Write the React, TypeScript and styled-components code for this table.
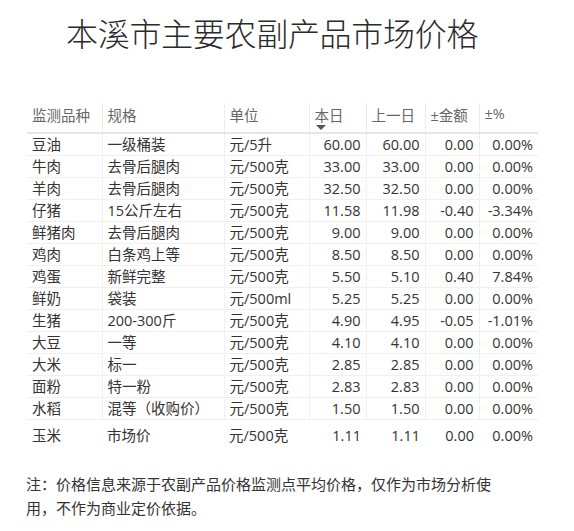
import styled, { createGlobalStyle } from 'styled-components'

const GlobalStyle = createGlobalStyle`
  body {
    margin: 0;
    background: #ffffff;
    font-family: "Open Sans", "Noto Sans CJK SC", sans-serif;
    color: #333333;
    text-spacing-trim: space-all;
  }
`

const Page = styled.main`
  width: 574px;
  height: 531px;
  display: flex;
  flex-direction: column;
  overflow: hidden;
`

const Title = styled.h1`
  margin: 0;
  padding: 11px 0 0 66px;
  font-family: "Noto Sans CJK SC", sans-serif;
  font-weight: 300;
  font-size: 32px;
  line-height: 42px;
  color: #2a2a2a;
  letter-spacing: -0.3px;
`

const TableWrap = styled.section`
  margin: 50px 0 0 27px;
  width: 511px;
`

const Table = styled.table`
  border-collapse: collapse;
  table-layout: fixed;
  width: 511px;
  font-size: 14.5px;
  font-family: "Open Sans", "Noto Sans CJK SC", sans-serif;
`

const Col = styled.col<{ $w: number }>`
  width: ${(p) => p.$w}px;
`

const HeadCell = styled.th`
  box-sizing: border-box;
  height: 30px;
  padding: 1px 0 0 5px;
  vertical-align: top;
  text-align: left;
  font-weight: 400;
  color: #666666;
  border-left: 1px solid #ececec;
  border-bottom: 2px solid #e6e6e6;
  position: relative;
  white-space: nowrap;
  overflow: hidden;

  &:first-child {
    border-left: none;
  }
`

const SortArrow = styled.span`
  position: absolute;
  left: 6px;
  top: 22px;
  width: 0;
  height: 0;
  border-left: 5px solid transparent;
  border-right: 5px solid transparent;
  border-top: 5px solid #555555;
`

const Row = styled.tr<{ $last?: boolean }>`
  height: ${(p) => (p.$last ? 27 : 22)}px;
`

const Cell = styled.td<{ $num?: boolean; $last?: boolean }>`
  box-sizing: border-box;
  padding: ${(p) => (p.$last ? '5px' : '0')} ${(p) => (p.$num ? '5px' : '0')} 0
    ${(p) => (p.$num ? '0' : '5px')};
  text-align: ${(p) => (p.$num ? 'right' : 'left')};
  color: #333333;
  white-space: nowrap;
  overflow: hidden;
  line-height: 21px;
  border-left: ${(p) => (p.$last ? 'none' : '1px solid #f0f0f0')};
  border-bottom: ${(p) => (p.$last ? 'none' : '1px solid #f0f0f0')};

  &:first-child {
    border-left: none;
  }
`

const Note = styled.p`
  margin: 25px 0 0 26px;
  width: 470px;
  font-size: 15px;
  line-height: 24px;
  color: #333333;
`

const columns = [
  { label: '监测品种', w: 75 },
  { label: '规格', w: 122 },
  { label: '单位', w: 85 },
  { label: '本日', w: 57, sorted: true },
  { label: '上一日', w: 59 },
  { label: '±金额', w: 54 },
  { label: '±%', w: 59 },
]

const rows: [string, string, string, string, string, string, string][] = [
  ['豆油', '一级桶装', '元/5升', '60.00', '60.00', '0.00', '0.00%'],
  ['牛肉', '去骨后腿肉', '元/500克', '33.00', '33.00', '0.00', '0.00%'],
  ['羊肉', '去骨后腿肉', '元/500克', '32.50', '32.50', '0.00', '0.00%'],
  ['仔猪', '15公斤左右', '元/500克', '11.58', '11.98', '-0.40', '-3.34%'],
  ['鲜猪肉', '去骨后腿肉', '元/500克', '9.00', '9.00', '0.00', '0.00%'],
  ['鸡肉', '白条鸡上等', '元/500克', '8.50', '8.50', '0.00', '0.00%'],
  ['鸡蛋', '新鲜完整', '元/500克', '5.50', '5.10', '0.40', '7.84%'],
  ['鲜奶', '袋装', '元/500ml', '5.25', '5.25', '0.00', '0.00%'],
  ['生猪', '200-300斤', '元/500克', '4.90', '4.95', '-0.05', '-1.01%'],
  ['大豆', '一等', '元/500克', '4.10', '4.10', '0.00', '0.00%'],
  ['大米', '标一', '元/500克', '2.85', '2.85', '0.00', '0.00%'],
  ['面粉', '特一粉', '元/500克', '2.83', '2.83', '0.00', '0.00%'],
  ['水稻', '混等（收购价）', '元/500克', '1.50', '1.50', '0.00', '0.00%'],
  ['玉米', '市场价', '元/500克', '1.11', '1.11', '0.00', '0.00%'],
]

const App: React.FC = () => (
  <>
    <GlobalStyle />
    <Page>
      <Title>本溪市主要农副产品市场价格</Title>
      <TableWrap>
        <Table>
          <colgroup>
            {columns.map((c) => (
              <Col key={c.label} $w={c.w} />
            ))}
          </colgroup>
          <thead>
            <tr>
              {columns.map((c) => (
                <HeadCell key={c.label}>
                  {c.label}
                  {c.sorted && <SortArrow />}
                </HeadCell>
              ))}
            </tr>
          </thead>
          <tbody>
            {rows.map((r, i) => {
              const last = i === rows.length - 1
              return (
                <Row key={r[0]} $last={last}>
                  {r.map((v, j) => (
                    <Cell key={j} $num={j >= 3} $last={last}>
                      {v}
                    </Cell>
                  ))}
                </Row>
              )
            })}
          </tbody>
        </Table>
      </TableWrap>
      <Note>
        注：价格信息来源于农副产品价格监测点平均价格，仅作为市场分析使用，不作为商业定价依据。
      </Note>
    </Page>
  </>
)

export { App as default }
